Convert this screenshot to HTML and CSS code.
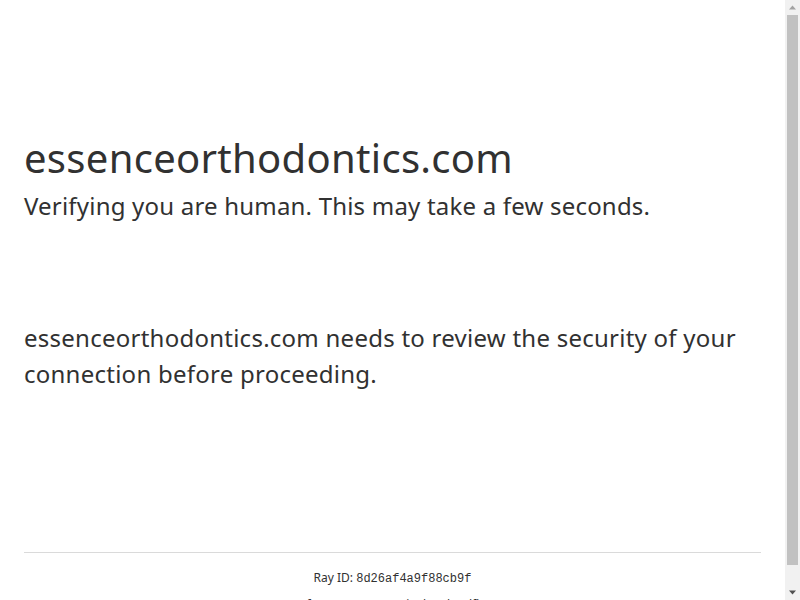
FILE: index.html
```html
<!DOCTYPE html>
<html lang="en-US">
<head>
  <meta charset="UTF-8" />
  <title>Just a moment...</title>
  <link rel="stylesheet" href="styles.css">
</head>
<body>
  <div class="main-wrapper">
    <div class="main-content">
      <h1 class="zone-name-title">essenceorthodontics.com</h1>
      <h2 class="h2">Verifying you are human. This may take a few seconds.</h2>
      <div class="challenge-stage"></div>
      <p class="core-msg">essenceorthodontics.com needs to review the security of your connection before proceeding.</p>
    </div>
  </div>
  <div class="footer">
    <div class="footer-inner">
      <div class="text-center">Ray ID: <code>8d26af4a9f88cb9f</code></div>
      <div class="text-center footer-text">Performance &amp; security by Cloudflare</div>
    </div>
  </div>

  <!-- window scrollbar, drawn since the headless shot hides it -->
  <div class="scrollbar">
    <svg class="arrow up" width="15" height="15" viewBox="0 0 15 15"><path d="M4 9.5 L7.5 5.5 L11 9.5 Z" fill="#a3a3a3"/></svg>
    <div class="track"><div class="thumb"></div></div>
    <svg class="arrow down" width="15" height="15" viewBox="0 0 15 15"><path d="M4 5.5 L11 5.5 L7.5 9.5 Z" fill="#505050"/></svg>
  </div>
</body>
</html>
```

FILE: styles.css
```css
* {
  box-sizing: border-box;
  margin: 0;
  padding: 0;
}
html {
  line-height: 1.15;
}
body {
  background-color: #fff;
  color: #313131;
  font-family: "Noto Sans", "Open Sans", sans-serif;
  padding-right: 15px;
}
.main-content {
  margin: 128px auto 0;
  max-width: 960px;
  padding-left: 24px;
  padding-right: 24px;
}
.zone-name-title {
  font-size: 40px;
  font-weight: 400;
  line-height: 60px;
  letter-spacing: 0.3px;
}
.h2 {
  font-size: 24px;
  font-weight: 400;
  line-height: 36px;
  letter-spacing: 0.2px;
}
.challenge-stage {
  height: 96px;
}
.core-msg {
  font-size: 24px;
  line-height: 36px;
  letter-spacing: 0.25px;
}
.footer {
  margin: 160px auto 0;
  max-width: 960px;
  padding-left: 24px;
  padding-right: 24px;
  font-size: 12px;
  line-height: 18px;
}
.footer-inner {
  border-top: 1px solid #dadada;
  padding-top: 16px;
  padding-bottom: 16px;
}
.text-center {
  text-align: center;
}
.footer-text {
  margin-top: 8px;
}
.footer code {
  font-family: "Liberation Mono", monospace;
  font-size: 12px;
}

.scrollbar {
  position: fixed;
  top: 0;
  right: 0;
  width: 15px;
  height: 100vh;
  background: #f1f1f1;
  display: flex;
  flex-direction: column;
}
.scrollbar .arrow {
  display: block;
  flex: none;
}
.scrollbar .track {
  flex: 1;
  padding: 0 2px;
}
.scrollbar .thumb {
  height: 550px;
  background: #c1c1c1;
}
```
